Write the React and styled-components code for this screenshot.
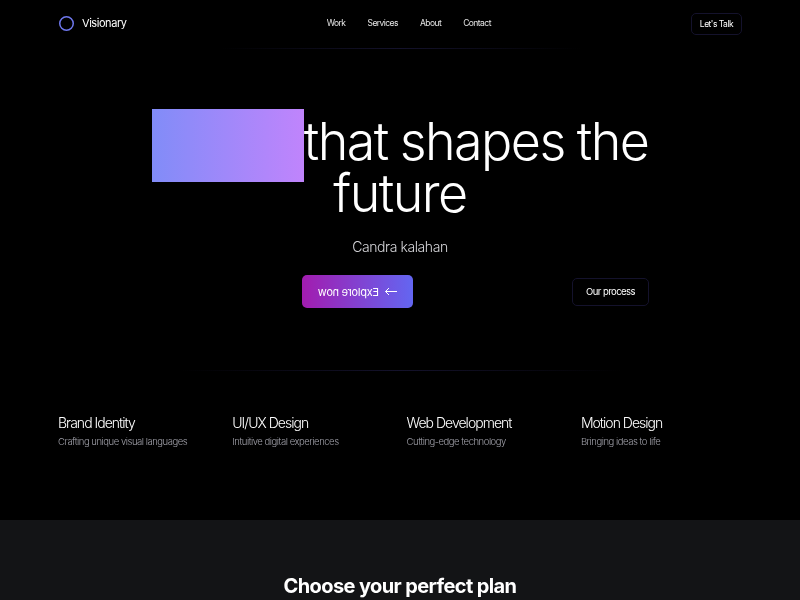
import React from 'react';
import styled, { createGlobalStyle } from 'styled-components';

const GlobalStyle = createGlobalStyle`
  * {
    box-sizing: border-box;
  }
  html, body {
    margin: 0;
    background: #000;
  }
  body {
    font-family: Inter, "Liberation Sans", sans-serif;
    color: #fff;
  }
`;

const Page = styled.div`
  height: 600px;
  overflow: hidden;
  will-change: transform;
`;

const Nav = styled.nav`
  display: flex;
  justify-content: space-between;
  align-items: center;
  height: 48px;
  padding: 0 58px 2px 59px;
`;

const Brand = styled.div`
  display: flex;
  align-items: center;
  gap: 8px;
  font-size: 11px;
  letter-spacing: -0.04em;
`;

const NavLinks = styled.div`
  display: flex;
  gap: 22px;
  font-size: 8.5px;
  letter-spacing: -0.065em;
  color: #e6e6e6;
`;

const Ghost = styled.button`
  background: transparent;
  border: 1px solid #14122c;
  border-radius: 5px;
  color: #fff;
  font: inherit;
  font-size: ${(p) => p.$size || 8.5}px;
  letter-spacing: -0.06em;
  height: ${(p) => p.$height || 22}px;
  width: ${(p) => p.$width || 51}px;
  padding: 0 0 1px;
`;

const TalkButton = styled(Ghost)`
  margin-top: 2px;
`;

const Divider = styled.div`
  height: 1px;
  width: ${(p) => p.$width}px;
  margin: ${(p) => p.$top || 0}px auto 0;
  background: linear-gradient(90deg, transparent, #14122c, transparent);
`;

const Hero = styled.section`
  padding-top: 60px;
  text-align: center;
`;

const Title = styled.h1`
  width: 520px;
  margin: 0 auto;
  font-size: 52px;
  font-weight: 300;
  line-height: 52px;
  letter-spacing: -0.03em;
  word-spacing: -1px;
`;

const Highlight = styled.span`
  display: inline-block;
  width: 152px;
  height: 73px;
  margin-bottom: -14px;
  vertical-align: -8px;
  background: linear-gradient(90deg, #818cf8, #c084fc);
`;

const Subtitle = styled.p`
  margin: 18px 0 0;
  font-size: 14px;
  font-weight: 300;
  letter-spacing: -0.03em;
  color: #d4d4d8;
`;

const Actions = styled.div`
  display: flex;
  align-items: center;
  justify-content: space-between;
  width: 347px;
  margin: 20px 0 0 302px;
`;

const Primary = styled.button`
  display: flex;
  align-items: center;
  justify-content: center;
  gap: 6px;
  width: 111px;
  height: 33px;
  padding: 0;
  border: 0;
  border-radius: 5px;
  color: #fff;
  font: inherit;
  font-size: 11px;
  letter-spacing: -0.025em;
  background: linear-gradient(90deg, #6366f1, #a21caf);
  transform: scaleX(-1);
`;

const Features = styled.div`
  display: grid;
  grid-template-columns: repeat(4, 174.3px);
  padding: 43px 0 0 58px;
`;

const FeatureTitle = styled.h3`
  margin: 0;
  font-size: 14px;
  font-weight: 300;
  line-height: 17px;
  letter-spacing: -0.07em;
`;

const FeatureText = styled.p`
  margin: 4px 0 0;
  font-size: 9.5px;
  font-weight: 300;
  line-height: 13px;
  letter-spacing: -0.05em;
  color: #a1a1aa;
`;

const Pricing = styled.section`
  height: 90px;
  margin-top: 72px;
  padding-top: 54px;
  background: #131416;
  text-align: center;
`;

const PricingTitle = styled.h2`
  margin: 0;
  font-size: 20px;
  font-weight: 700;
  line-height: 24px;
  letter-spacing: -0.03em;
`;

const services = [
  { title: 'Brand Identity', text: 'Crafting unique visual languages' },
  { title: 'UI/UX Design', text: 'Intuitive digital experiences' },
  { title: 'Web Development', text: 'Cutting-edge technology' },
  { title: 'Motion Design', text: 'Bringing ideas to life' },
];

export default function App() {
  return (
    <Page>
      <GlobalStyle />
      <Nav>
        <Brand>
          <svg width="15" height="15" viewBox="0 0 15 15" fill="none">
            <circle cx="7.5" cy="7.5" r="6.75" stroke="#6f78ee" strokeWidth="1.5" />
          </svg>
          Visionary
        </Brand>
        <NavLinks>
          <span>Work</span>
          <span>Services</span>
          <span>About</span>
          <span>Contact</span>
        </NavLinks>
        <TalkButton>Let's Talk</TalkButton>
      </Nav>
      <Divider $width={360} />
      <Hero>
        <Title>
          <Highlight />
          that shapes the future
        </Title>
        <Subtitle>Candra kalahan</Subtitle>
        <Actions>
          <Primary>
            <svg width="12" height="9" viewBox="0 0 12 9" fill="none" stroke="#fff" strokeWidth="1">
              <path d="M0 4.5H11.5M8 1L11.5 4.5L8 8" />
            </svg>
            Explore now
          </Primary>
          <Ghost $width={77} $height={28} $size={9.5}>
            Our process
          </Ghost>
        </Actions>
      </Hero>
      <Divider $width={440} $top={62} />
      <Features>
        {services.map((item) => (
          <div key={item.title}>
            <FeatureTitle>{item.title}</FeatureTitle>
            <FeatureText>{item.text}</FeatureText>
          </div>
        ))}
      </Features>
      <Pricing>
        <PricingTitle>Choose your perfect plan</PricingTitle>
      </Pricing>
    </Page>
  );
}
